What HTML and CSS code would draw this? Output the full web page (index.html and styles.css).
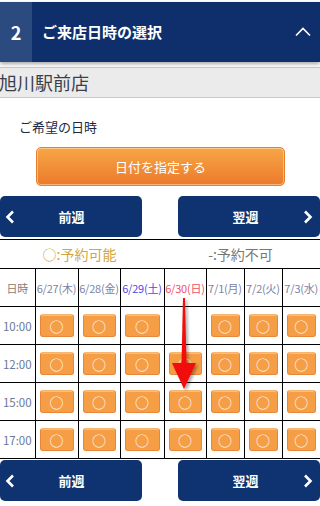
FILE: index.html
```html
<!DOCTYPE html>
<html lang="ja">
<head>
<meta charset="utf-8">
<title>ご来店日時の選択</title>
<link rel="stylesheet" href="styles.css">
</head>
<body>
<header class="step-head">
  <div class="step-num">2</div>
  <h2 class="step-title">ご来店日時の選択</h2>
  <svg class="step-toggle" width="16" height="10" viewBox="0 0 16 10"><polyline points="1,8.5 8,1.5 15,8.5" fill="none" stroke="#fff" stroke-width="1.6"/></svg>
</header>
<div class="store-bar">旭川駅前店</div>
<main class="content">
  <p class="label">ご希望の日時</p>
  <div class="date-row"><button class="date-btn">日付を指定する</button></div>
  <nav class="week-nav">
    <a class="week-btn prev"><svg class="chev" width="10" height="14" viewBox="0 0 10 14"><polyline points="8,1.5 2.5,7 8,12.5" fill="none" stroke="#fff" stroke-width="2.6"/></svg><span>前週</span></a>
    <a class="week-btn next"><span>翌週</span><svg class="chev" width="10" height="14" viewBox="0 0 10 14"><polyline points="2,1.5 7.5,7 2,12.5" fill="none" stroke="#fff" stroke-width="2.6"/></svg></a>
  </nav>
  <div class="legend">
    <span class="ok">○:予約可能</span>
    <span class="ng">-:予約不可</span>
  </div>
  <table class="slots">
    <colgroup>
      <col class="w35"><col class="w43"><col class="w42"><col class="w44"><col class="w42"><col class="w38"><col class="w38"><col class="w38">
    </colgroup>
    <tr class="head">
      <th class="t">日時</th>
      <th>6/27(木)</th><th>6/28(金)</th><th class="sat">6/29(土)</th><th class="sun">6/30(日)</th><th>7/1(月)</th><th>7/2(火)</th><th>7/3(水)</th>
    </tr>
    <tr>
      <td class="t">10:00</td>
      <td><span class="slot">○</span></td><td><span class="slot">○</span></td><td><span class="slot">○</span></td><td></td><td><span class="slot">○</span></td><td><span class="slot">○</span></td><td><span class="slot">○</span></td>
    </tr>
    <tr>
      <td class="t">12:00</td>
      <td><span class="slot">○</span></td><td><span class="slot">○</span></td><td><span class="slot">○</span></td><td><span class="slot">○</span></td><td><span class="slot">○</span></td><td><span class="slot">○</span></td><td><span class="slot">○</span></td>
    </tr>
    <tr>
      <td class="t">15:00</td>
      <td><span class="slot">○</span></td><td><span class="slot">○</span></td><td><span class="slot">○</span></td><td><span class="slot">○</span></td><td><span class="slot">○</span></td><td><span class="slot">○</span></td><td><span class="slot">○</span></td>
    </tr>
    <tr>
      <td class="t">17:00</td>
      <td><span class="slot">○</span></td><td><span class="slot">○</span></td><td><span class="slot">○</span></td><td><span class="slot">○</span></td><td><span class="slot">○</span></td><td><span class="slot">○</span></td><td><span class="slot">○</span></td>
    </tr>
  </table>
  <nav class="week-nav bottom">
    <a class="week-btn prev"><svg class="chev" width="10" height="14" viewBox="0 0 10 14"><polyline points="8,1.5 2.5,7 8,12.5" fill="none" stroke="#fff" stroke-width="2.6"/></svg><span>前週</span></a>
    <a class="week-btn next"><span>翌週</span><svg class="chev" width="10" height="14" viewBox="0 0 10 14"><polyline points="2,1.5 7.5,7 2,12.5" fill="none" stroke="#fff" stroke-width="2.6"/></svg></a>
  </nav>
</main>
<svg class="arrow" width="32" height="100" viewBox="0 0 32 100">
  <defs>
    <filter id="sh" x="-50%" y="-20%" width="200%" height="140%">
      <feDropShadow dx="2" dy="2" stdDeviation="1.5" flood-color="#000" flood-opacity="0.35"/>
    </filter>
  </defs>
  <path d="M13,2 L15,2 L16.5,67 L26,67 L14,93 L2,67 L11.5,67 Z" fill="#f20a0a" filter="url(#sh)"/>
</svg>
</body>
</html>
```

FILE: styles.css
```css
* { box-sizing: border-box; }
html, body { margin: 0; padding: 0; background: #fff; }
body {
  width: 320px;
  height: 506px;
  overflow: hidden;
  position: relative;
  font-family: "Noto Sans CJK JP", "Noto Sans", sans-serif;
  color: #333;
}

.step-head {
  margin-top: 2px;
  height: 60px;
  display: flex;
  align-items: center;
  background: #0e2f6b;
  color: #fff;
  box-shadow: 0 2px 4px rgba(0, 0, 0, 0.35);
  position: relative;
}
.step-num {
  width: 32px;
  height: 100%;
  background: #2b4a80;
  display: flex;
  align-items: center;
  justify-content: center;
  font-size: 18px;
  font-weight: bold;
}
.step-title {
  flex: 1;
  margin: 0;
  padding-left: 10px;
  font-size: 15px;
  font-weight: bold;
  line-height: 20px;
}
.step-toggle { margin-right: 9px; }

.store-bar {
  margin-top: 5px;
  height: 31px;
  border-top: 1px solid #c9c9c9;
  border-bottom: 1px solid #c9c9c9;
  background: #ebebeb;
  font-size: 18px;
  line-height: 28px;
  color: #3a3f4a;
  text-indent: -1px;
}

.content { display: flex; flex-direction: column; }

.label {
  margin: 19px 0 0 19px;
  font-size: 13px;
  line-height: 20px;
  color: #1d2a44;
}

.date-row { margin-top: 10px; display: flex; justify-content: center; }
.date-btn {
  width: 249px;
  height: 39px;
  margin-left: 1px;
  border: 1px solid #e6802f;
  border-radius: 5px;
  background: linear-gradient(#f7a647, #ec7a2b);
  box-shadow: inset 0 0 0 1px rgba(255, 230, 190, 0.55);
  color: #fff;
  font-family: inherit;
  font-size: 13px;
  padding: 0;
}

.week-nav {
  margin-top: 10px;
  display: flex;
  justify-content: space-between;
}
.week-btn {
  width: 142px;
  height: 41px;
  border-radius: 5px;
  background: #0f3370;
  color: #fff;
  display: flex;
  align-items: center;
  font-size: 13px;
  font-weight: bold;
}
.week-btn span { flex: 1; text-align: center; }
.week-btn.prev { padding-left: 5px; padding-right: 14px; }
.week-btn.next { padding-right: 7px; padding-left: 10px; }

.legend {
  margin-top: 2px;
  border-top: 1px solid #000;
  height: 29px;
  display: flex;
  align-items: center;
  font-size: 14px;
}
.legend span { flex: 1; text-align: center; }
.legend .ok { color: #d2a640; }
.legend .ng { color: #777; padding-left: 2px; }

.slots {
  width: 320px;
  border-collapse: collapse;
  table-layout: fixed;
}
.w35 { width: 35px; }
.w38 { width: 38px; }
.w42 { width: 42px; }
.w43 { width: 43px; }
.w44 { width: 44px; }
.slots th, .slots td {
  border: 1px solid #000;
  padding: 0 4px;
  height: 38px;
  text-align: center;
  vertical-align: middle;
}
.slots tr > :first-child { border-left: none; }
.slots tr > :last-child { border-right: none; }
.slots th {
  padding: 0;
  white-space: nowrap;
  font-size: 11px;
  font-weight: normal;
  color: #7b82a6;
  letter-spacing: -0.2px;
}
.slots th.t { color: #8f7a70; }
.slots th.sat { color: #5547e6; }
.slots th.sun { color: #f0506a; }
.slots td.t {
  padding: 0;
  font-size: 11.5px;
  color: #6b7896;
}
.slot {
  display: flex;
  align-items: center;
  justify-content: center;
  height: 23px;
  border: 1px solid #e8863a;
  border-top-color: #f7b670;
  border-radius: 3px;
  background: #f59e46;
  box-shadow: inset 0 1px 0 rgba(255, 210, 150, 0.6);
  color: #fff;
  font-size: 14px;
  line-height: 1;
}

.week-nav.bottom { margin-top: 1px; }

.arrow {
  position: absolute;
  left: 170px;
  top: 296px;
}
```
